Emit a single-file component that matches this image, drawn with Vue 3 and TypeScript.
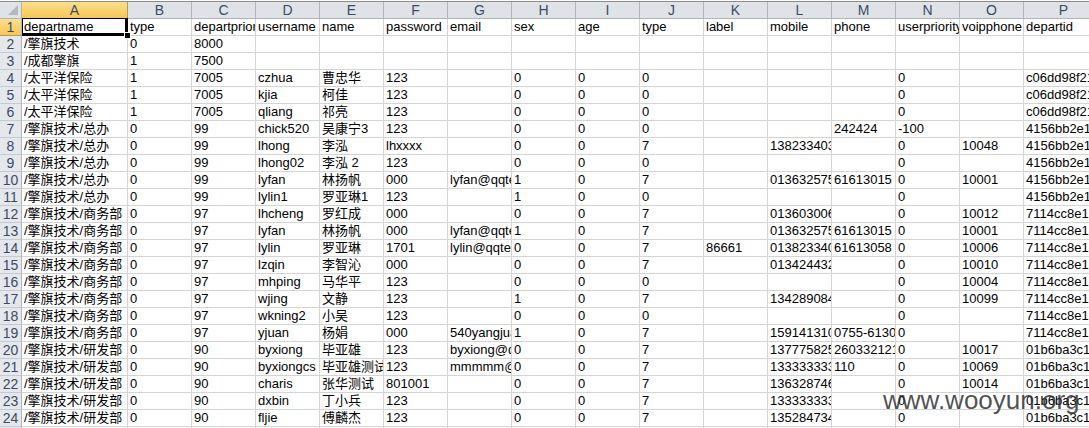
<script setup lang="ts">
const columns: string[] = 'ABCDEFGHIJKLMNOP'.split('')
const ZW = '/擎旗技术'
const ZB = '/擎旗技术/总办'
const SW = '/擎旗技术/商务部'
const YF = '/擎旗技术/研发部'
const C = 'c06dd98f21'
const Z = '4156bb2e1'
const S = '7114cc8e1'
const Y = '01b6ba3c1'
const rows: string[][] = [
  ['departname', 'type', 'departpriority', 'username', 'name', 'password', 'email', 'sex', 'age', 'type', 'label', 'mobile', 'phone', 'userpriority', 'voipphone', 'departid'],
  [ZW, '0', '8000'],
  ['/成都擎旗', '1', '7500'],
  ['/太平洋保险', '1', '7005', 'czhua', '曹忠华', '123', '', '0', '0', '0', '', '', '', '0', '', C],
  ['/太平洋保险', '1', '7005', 'kjia', '柯佳', '123', '', '0', '0', '0', '', '', '', '0', '', C],
  ['/太平洋保险', '1', '7005', 'qliang', '祁亮', '123', '', '0', '0', '0', '', '', '', '0', '', C],
  [ZB, '0', '99', 'chick520', '吴康宁3', '123', '', '0', '0', '0', '', '', '242424', '-100', '', Z],
  [ZB, '0', '99', 'lhong', '李泓', 'lhxxxx', '', '0', '0', '7', '', '13823340386', '', '0', '10048', Z],
  [ZB, '0', '99', 'lhong02', '李泓 2', '123', '', '0', '0', '0', '', '', '', '0', '', Z],
  [ZB, '0', '99', 'lyfan', '林扬帆', '000', 'lyfan@qqtech', '1', '0', '7', '', '01363257562', '61613015', '0', '10001', Z],
  [ZB, '0', '99', 'lylin1', '罗亚琳1', '123', '', '1', '0', '0', '', '', '', '0', '', Z],
  [SW, '0', '97', 'lhcheng', '罗红成', '000', '', '0', '0', '7', '', '01360300612', '', '0', '10012', S],
  [SW, '0', '97', 'lyfan', '林扬帆', '000', 'lyfan@qqtech', '1', '0', '7', '', '01363257562', '61613015', '0', '10001', S],
  [SW, '0', '97', 'lylin', '罗亚琳', '1701', 'lylin@qqtech', '0', '0', '7', '86661', '01382334012', '61613058', '0', '10006', S],
  [SW, '0', '97', 'lzqin', '李智沁', '000', '', '0', '0', '7', '', '01342443212', '', '0', '10010', S],
  [SW, '0', '97', 'mhping', '马华平', '123', '', '0', '0', '0', '', '', '', '0', '10004', S],
  [SW, '0', '97', 'wjing', '文静', '123', '', '1', '0', '7', '', '13428908412', '', '0', '10099', S],
  [SW, '0', '97', 'wkning2', '小吴', '123', '', '0', '0', '0', '', '', '', '0', '', S],
  [SW, '0', '97', 'yjuan', '杨娟', '000', '540yangjuan', '1', '0', '7', '', '15914131012', '0755-61302', '0', '', S],
  [YF, '0', '90', 'byxiong', '毕亚雄', '123', 'byxiong@qq', '0', '0', '7', '', '13777582512', '26033212101', '0', '10017', Y],
  [YF, '0', '90', 'byxiongcs', '毕亚雄测试', '123', 'mmmmm@qq', '0', '0', '7', '', '13333333333', '110', '0', '10069', Y],
  [YF, '0', '90', 'charis', '张华测试', '801001', '', '0', '0', '7', '', '13632874612', '', '0', '10014', Y],
  [YF, '0', '90', 'dxbin', '丁小兵', '123', '', '0', '0', '7', '', '13333333333', '', '0', '', Y],
  [YF, '0', '90', 'fljie', '傅麟杰', '123', '', '0', '0', '7', '', '13528473412', '', '0', '', Y],
  [],
]
</script>

<template>
  <div class="sheet">
    <div class="head-row">
      <div class="corner"><span class="corner-mark"></span></div>
      <div
        v-for="(col, i) in columns"
        :key="col"
        class="col-head"
        :class="{ active: i === 0 }"
      >{{ col }}</div>
    </div>
    <div v-for="(row, r) in rows" :key="r" class="row">
      <div class="row-head" :class="{ active: r === 0 }">{{ r + 1 }}</div>
      <div
        v-for="(col, c) in columns"
        :key="col"
        class="cell"
        :class="{ selected: r === 0 && c === 0 }"
      ><span class="cell-text">{{ row[c] }}</span><i v-if="r === 0 && c === 0" class="handle"></i></div>
    </div>
    <div class="watermark">www.wooyun.org</div>
  </div>
</template>

<style>
html, body { margin: 0; background: #fff; overflow: hidden; }
</style>

<style scoped>
.sheet {
  position: relative;
  width: 1089px;
  height: 428px;
  overflow: hidden;
  padding-top: 1px;
  box-sizing: border-box;
  background: #fff;
  font-family: "Liberation Sans", "Noto Sans CJK SC", sans-serif;
  font-size: 13px;
  color: #000;
}
.head-row, .row {
  display: grid;
  grid-template-columns: 22px 106px repeat(14, 64px) 80px;
  width: 1104px;
}
.head-row {
  height: 18px;
  box-sizing: border-box;
  border-top: 1px solid #8c8c8c;
  background: #dfe3e8;
}
.corner {
  position: relative;
  border-right: 1px solid #b1b5ba;
  border-bottom: 1px solid #b1b5ba;
}
.corner-mark {
  position: absolute;
  right: 3px;
  bottom: 3px;
  width: 0;
  height: 0;
  border-left: 10px solid transparent;
  border-bottom: 10px solid #b4b9bf;
}
.col-head {
  border-right: 1px solid #b1b5ba;
  border-bottom: 1px solid #b1b5ba;
  text-align: center;
  font-size: 14px;
  line-height: 16px;
  color: #3c4b63;
}
.col-head.active {
  background: linear-gradient(#fbe08c, #f6c658);
  border-right-color: #c29a3e;
  border-bottom-color: #c29a3e;
}
.row { height: 17px; }
.row-head {
  background: #e4e7ec;
  border-right: 1px solid #b1b5ba;
  border-bottom: 1px solid #c6cace;
  text-align: center;
  font-size: 14px;
  line-height: 16px;
  color: #3c4b63;
}
.row-head.active {
  background: linear-gradient(#fbe08c, #f6c658);
  border-bottom-color: #c29a3e;
}
.cell {
  position: relative;
  min-width: 0;
  padding-left: 2px;
  border-right: 1px solid #d4d4d4;
  border-bottom: 1px solid #d4d4d4;
  line-height: 16px;
}
.cell-text {
  display: block;
  overflow: hidden;
  white-space: nowrap;
}
.cell.selected { z-index: 1; }
.cell.selected::after {
  content: "";
  position: absolute;
  left: 0;
  top: -1px;
  right: -1px;
  bottom: -1px;
  border-style: solid;
  border-color: #000;
  border-width: 1px 3px 3px 1px;
  pointer-events: none;
}
.handle {
  position: absolute;
  right: -4px;
  bottom: -4px;
  width: 5px;
  height: 5px;
  background: #000;
  border: 1px solid #fff;
  z-index: 2;
}
.watermark {
  position: absolute;
  left: 883px;
  top: 385px;
  font-size: 26px;
  line-height: 30px;
  color: rgba(50, 50, 50, 0.85);
  white-space: nowrap;
  z-index: 3;
}
</style>
